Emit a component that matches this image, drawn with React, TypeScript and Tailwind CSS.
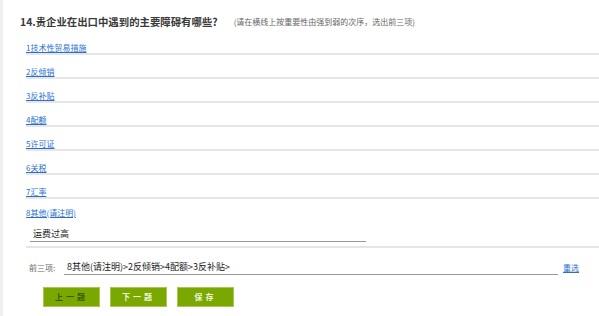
import React from "react";

const font = { fontFamily: '"Noto Sans CJK SC", "Noto Sans", sans-serif' };

const options = [
  "1技术性贸易措施",
  "2反倾销",
  "3反补贴",
  "4配额",
  "5许可证",
  "6关税",
  "7汇率",
];

export default function App() {
  return (
    <div
      className="w-[599px] h-[316px] bg-white border-l-[3px] border-[#f0f0f0] overflow-hidden"
      style={font}
    >
      <div className="pt-[15px] pl-[17px] flex items-center">
        <span className="text-[10.4px] leading-[14px] font-bold text-[#3a3a3a]">
          14.贵企业在出口中遇到的主要障碍有哪些?
        </span>
        <span className="ml-[16px] text-[8px] leading-[12px] text-[#666]">
          (请在横线上按重要性由强到弱的次序，选出前三项)
        </span>
      </div>

      <div className="ml-[23px] mt-[2px]">
        {options.map((o) => (
          <div
            key={o}
            className="h-[24px] flex items-end border-b-2 border-[#e6e6e6]"
          >
            <a className="text-[8px] leading-[11px] text-[#2a6fd0] underline cursor-pointer">
              {o}
            </a>
          </div>
        ))}
        <div className="border-b-2 border-[#e6e6e6] pb-[4px]">
          <div className="pt-[8px] flex">
            <a className="text-[8px] leading-[11px] text-[#2a6fd0] underline cursor-pointer">
              8其他(请注明)
            </a>
          </div>
          <div className="mt-[8px] ml-[4px] w-[336px] h-[16px] border-b border-[#999] flex items-center pl-[3px]">
            <span className="text-[9px] leading-[12px] text-[#222]">运费过高</span>
          </div>
        </div>
      </div>

      <div className="mt-[13px] pl-[26px] flex items-end">
        <span className="w-[35px] text-[8px] leading-[12px] text-[#666] pb-[1px]">
          前三项:
        </span>
        <div className="w-[494px] border-b border-[#999] pl-[3px] pb-[1px] flex">
          <span className="text-[9px] leading-[12px] text-[#222]">
            8其他(请注明)&gt;2反倾销&gt;4配额&gt;3反补贴&gt;
          </span>
        </div>
        <a className="ml-[5px] pb-[1px] text-[8px] leading-[12px] text-[#2a6fd0] underline cursor-pointer">
          重选
        </a>
      </div>

      <div className="mt-[12px] pl-[40px] flex gap-[10px]">
        <button className="w-[57px] h-[20px] bg-[#7aa800] border border-[#a8c850] text-[8px] leading-[12px] text-[#3d5a00] tracking-[3px] font-bold">
          上一题
        </button>
        <button className="w-[57px] h-[20px] bg-[#7aa800] border border-[#a8c850] text-[8px] leading-[12px] text-[#eef5dc] tracking-[3px] font-bold">
          下一题
        </button>
        <button className="w-[57px] h-[20px] bg-[#7aa800] border border-[#a8c850] text-[8px] leading-[12px] text-[#eef5dc] tracking-[3px] font-bold">
          保存
        </button>
      </div>
    </div>
  );
}
